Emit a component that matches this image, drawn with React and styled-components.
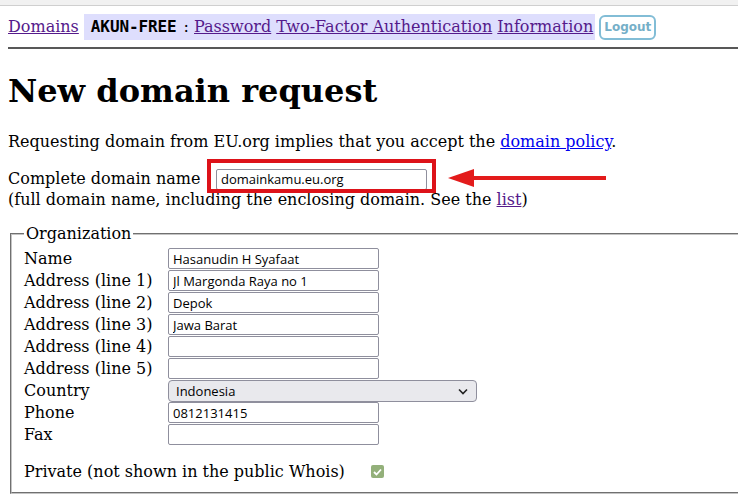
import styled, { createGlobalStyle } from 'styled-components';

const Global = createGlobalStyle`
    html, body {
        margin: 0;
        padding: 0;
        background: #fff;
        overflow: hidden;
    }
    body {
        font-family: 'DejaVu Serif', serif;
        font-size: 16px;
        color: #000;
    }
`;

const Chrome = styled.div`
    height: 5px;
    background: #f1f1f1;
    border-bottom: 1px solid #cfcfcf;
`;

const Page = styled.div`
    padding-left: 8px;
`;

const Link = styled.a`
    color: ${(p) => (p.$fresh ? '#0000ee' : '#551a8b')};
    text-decoration: underline;
    cursor: pointer;
`;

const Nav = styled.div`
    display: flex;
    align-items: center;
    height: 26px;
    margin-top: 8px;
    line-height: 26px;
    white-space: nowrap;
`;

const Account = styled.span`
    display: inline-flex;
    align-items: center;
    gap: 5px;
    height: 26px;
    margin-left: 5px;
    padding: 0 2px 0 7px;
    background: #dedefd;
`;

const User = styled.b`
    font-family: 'DejaVu Sans Mono', monospace;
    font-size: 16px;
    letter-spacing: -0.1px;
    margin-right: 2px;
`;

const Logout = styled.button`
    height: 25px;
    margin-left: 4px;
    padding: 0 3px;
    border: 2.5px solid #82bdd6;
    border-radius: 6px;
    background: #fff;
    color: #75afc8;
    font-family: 'DejaVu Sans', sans-serif;
    font-weight: bold;
    font-size: 12px;
`;

const Rule = styled.hr`
    margin: 7px 0 0;
    border: 0;
    height: 2px;
    background: #585858;
`;

const Title = styled.h1`
    margin: 24px 0 0;
    font-size: 32px;
    line-height: 37px;
    font-weight: bold;
`;

const Intro = styled.p`
    margin: 22px 0 0;
    line-height: 19px;
`;

const DomainBlock = styled.div`
    margin-top: 17px;
    line-height: 21px;
`;

const DomainLine = styled.div`
    display: flex;
    align-items: center;
    height: 21px;
`;

const DomainLabel = styled.span`
    width: 208px;
`;

const Marked = styled.span`
    position: relative;
    display: inline-block;
    height: 21px;
`;

const RedBox = styled.span`
    position: absolute;
    left: -9px;
    top: -9px;
    width: 229px;
    height: 34px;
    border: 4px solid #dd1219;
    box-sizing: border-box;
    pointer-events: none;
`;

const Arrow = styled.svg`
    position: absolute;
    left: 232px;
    top: -2px;
    overflow: visible;
`;

const Field = styled.input`
    box-sizing: border-box;
    width: 211px;
    height: 21px;
    margin: 0;
    padding: 0 4px;
    border: 1px solid #8f8f9d;
    border-radius: 2px;
    background: #fff;
    font-family: 'Open Sans', 'Noto Sans', sans-serif;
    font-size: 13px;
    color: #000;
`;

const Org = styled.fieldset`
    margin: 14px -40px 0 2px;
    padding: 5px 12px 10px;
    border: 2px groove #c4c4c4;
`;

const Legend = styled.legend`
    padding: 0 2px;
    line-height: 19px;
`;

const Grid = styled.div`
    display: grid;
    grid-template-columns: 144px auto;
    grid-auto-rows: 22px;
    align-items: start;
    justify-items: start;
`;

const Label = styled.span`
    line-height: 22px;
`;

const SelectBox = styled.div`
    position: relative;
    box-sizing: border-box;
    width: 309px;
    height: 22px;
    padding: 0 7px;
    border: 1px solid #8f8f9d;
    border-radius: 4px;
    background: #e9e9ed;
    font-family: 'Open Sans', 'Noto Sans', sans-serif;
    font-size: 13px;
    line-height: 20px;
`;

const Chevron = styled.svg`
    position: absolute;
    right: 8px;
    top: 7px;
`;

const PrivateRow = styled.div`
    display: flex;
    align-items: center;
    gap: 26px;
    margin-top: 15px;
    line-height: 21px;
`;

const Check = styled.span`
    display: inline-flex;
    align-items: center;
    justify-content: center;
    width: 13px;
    height: 13px;
    border-radius: 2px;
    background: #93b07a;
`;

const rows = [
    ['Name', 'Hasanudin H Syafaat'],
    ['Address (line 1)', 'Jl Margonda Raya no 1'],
    ['Address (line 2)', 'Depok'],
    ['Address (line 3)', 'Jawa Barat'],
    ['Address (line 4)', ''],
    ['Address (line 5)', ''],
    ['Country', null],
    ['Phone', '0812131415'],
    ['Fax', ''],
];

export default function App() {
    return (
        <>
            <Global />
            <Chrome />
            <Page>
                <Nav>
                    <Link>Domains</Link>
                    <Account>
                        <User>AKUN-FREE</User>
                        <span>:</span>
                        <Link>Password</Link>
                        <Link>Two-Factor Authentication</Link>
                        <Link>Information</Link>
                    </Account>
                    <Logout>Logout</Logout>
                </Nav>
                <Rule />
                <Title>New domain request</Title>
                <Intro>
                    Requesting domain from EU.org implies that you accept the{' '}
                    <Link $fresh>domain policy</Link>.
                </Intro>
                <DomainBlock>
                    <DomainLine>
                        <DomainLabel>Complete domain name</DomainLabel>
                        <Marked>
                            <Field defaultValue="domainkamu.eu.org" />
                            <RedBox />
                            <Arrow width="160" height="24" viewBox="0 0 160 24">
                                <polygon points="0,12 26,3 26,21" fill="#e31b1b" />
                                <rect x="24" y="10" width="134" height="4" fill="#e31b1b" />
                            </Arrow>
                        </Marked>
                    </DomainLine>
                    <div>
                        (full domain name, including the enclosing domain. See the <Link>list</Link>)
                    </div>
                </DomainBlock>
                <Org>
                    <Legend>Organization</Legend>
                    <Grid>
                        {rows.map(([label, value]) => [
                            <Label key={label}>{label}</Label>,
                            value === null ? (
                                <SelectBox key={label + 'v'}>
                                    Indonesia
                                    <Chevron width="10" height="7" viewBox="0 0 10 7">
                                        <path d="M1 1.5 L5 5.5 L9 1.5" fill="none" stroke="#222" strokeWidth="1.6" />
                                    </Chevron>
                                </SelectBox>
                            ) : (
                                <Field key={label + 'v'} defaultValue={value} />
                            ),
                        ])}
                    </Grid>
                    <PrivateRow>
                        <span>Private (not shown in the public Whois)</span>
                        <Check>
                            <svg width="9" height="8" viewBox="0 0 9 8">
                                <path d="M1 4 L3.5 6.5 L8 1.5" fill="none" stroke="#fff" strokeWidth="1.8" />
                            </svg>
                        </Check>
                    </PrivateRow>
                </Org>
            </Page>
        </>
    );
}
